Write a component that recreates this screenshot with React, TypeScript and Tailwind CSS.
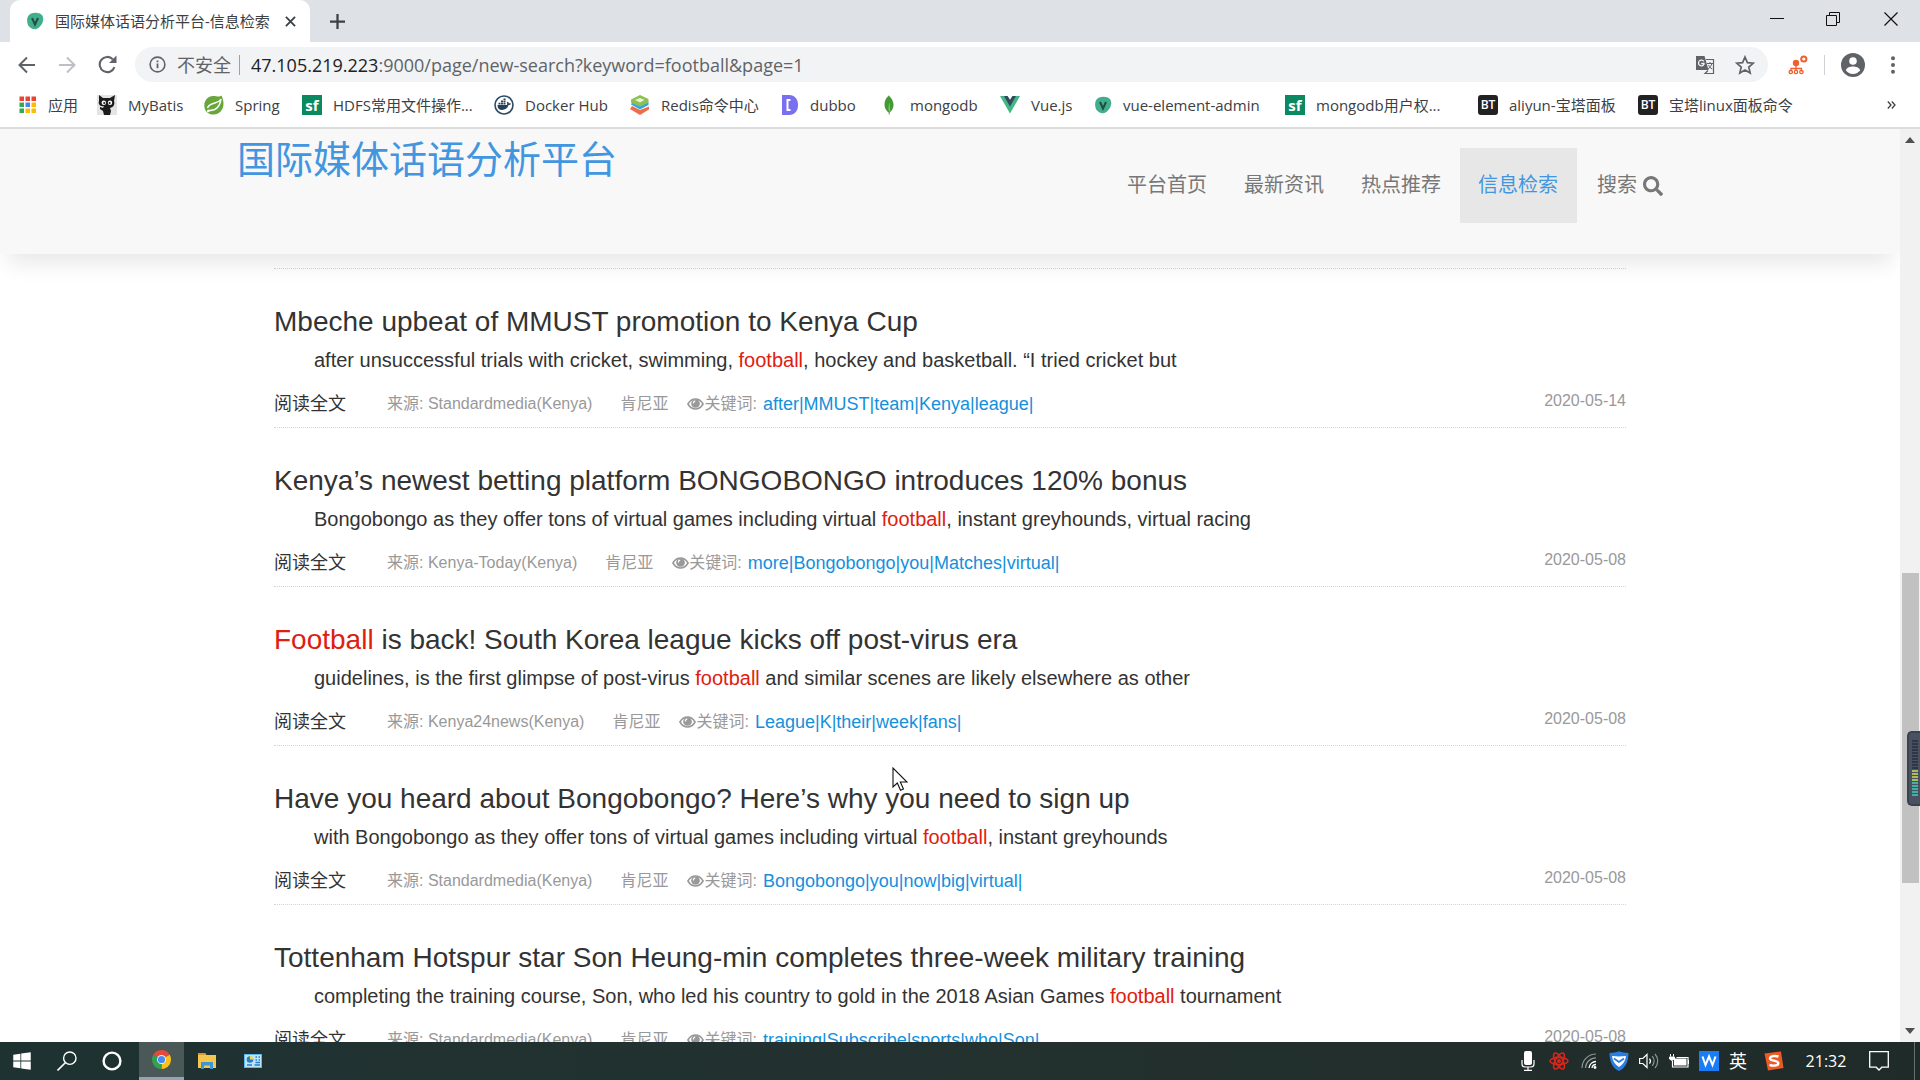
import React from "react";
import { FaSearch, FaWindows } from "react-icons/fa";
import { SiMongodb } from "react-icons/si";

/* ---------- browser icons ---------- */

function LeafIcon({ className }: { className: string }) {
  return (
    <svg viewBox="0 0 18 18" className={className} aria-hidden="true">
      <path d="M4.500 1.800C8 .3 13 .2 16 3c2.500 4 1 8.500-3 12.500C9.500 18.500 5 17.500 2.200 13.500.2 9.500.8 3.800 4.500 1.800z" fill="#41b08a" />
      <path d="M6 6l3 6.500L12 6" fill="none" stroke="#234b4c" strokeWidth="2" />
    </svg>
  );
}

function AppsIcon() {
  const colors = ["#ea4335", "#ea4335", "#ea4335", "#34a853", "#4285f4", "#fbbc05", "#34a853", "#fbbc05", "#fbbc05"];
  return (
    <svg viewBox="0 0 18 18" className="size-[18px]" aria-hidden="true">
      {colors.map((c, i) => (
        <rect key={i} x={(i % 3) * 6 + 0.5} y={Math.floor(i / 3) * 6 + 0.5} width="4.500" height="4.500" fill={c} />
      ))}
    </svg>
  );
}

function CatIcon() {
  return (
    <svg viewBox="0 0 20 20" className="size-5" aria-hidden="true">
      <rect width="20" height="20" fill="#e4e4e4" />
      <path d="M2 0l4 3h7l5-3-1 6c1 3 0 6-4 7l1 3-1 4H7l-1-4-3-2v-2l3 1 1-2C3 12 1 9 2 6z" fill="#1c1c1c" />
      <circle cx="6.800" cy="7.800" r="2.200" fill="#fff" />
      <circle cx="13" cy="7.800" r="2.200" fill="#fff" />
      <circle cx="7.200" cy="8" r="1" fill="#1c1c1c" />
      <circle cx="12.600" cy="8" r="1" fill="#1c1c1c" />
    </svg>
  );
}

function SpringIcon() {
  return (
    <svg viewBox="0 0 20 20" className="size-5" aria-hidden="true">
      <path d="M17.500 .5C19.500 5 20.500 10 18 14.500c-2 4-6 5.500-10 5C3.500 19 .3 15.500.3 10.500.3 5 4 1.200 9 1c3.500 0 6.500 1.500 8.500-.5z" fill="#68a53b" />
      <path d="M3.500 15.500c7 .8 12-1.500 13.500-11.500-3 5.500-12 3-13.500 9" fill="none" stroke="#fff" strokeWidth="1.500" />
      <circle cx="4" cy="16.300" r="1.100" fill="#fff" />
    </svg>
  );
}

function SfIcon() {
  return (
    <span aria-hidden="true" className="flex size-5 items-center justify-center bg-[#0b8a61] font-['Open_Sans',sans-serif] text-[15px] leading-5 font-bold text-white">
      sf
    </span>
  );
}

function BtIcon() {
  return (
    <span aria-hidden="true" className="flex size-5 items-center justify-center rounded-[3px] bg-[#222] font-['Open_Sans',sans-serif] text-[12px] leading-5 font-semibold text-white">
      BT
    </span>
  );
}

function DockerIcon() {
  return (
    <svg viewBox="0 0 20 20" className="size-5" aria-hidden="true">
      <circle cx="10" cy="10" r="9" fill="#fff" stroke="#2b4a63" strokeWidth="1.600" />
      <path d="M3.500 10h9.200c.8-.5.600-1.800.1-2.500l.9-.8c.9.500 1.100 1.200 1.200 1.700.8-.1 1.500 0 2 .4-.4 1-1.300 1.300-2.300 1.300C13.500 13.500 11 15 8 15c-3 0-4.600-1.800-4.500-5z" fill="#24415a" />
      <path d="M4.500 7.700h2v1.800h-2zM7 7.700h2v1.800H7zM9.500 7.700h2v1.800h-2zM7 5.500h2v1.800H7zM9.500 5.500h2v1.800h-2zM9.500 3.500h2v1.400h-2z" fill="#24415a" />
    </svg>
  );
}

function StackIcon() {
  return (
    <svg viewBox="0 0 20 20" className="size-5" aria-hidden="true">
      <path d="M0 14l10 6 9-5.500v-3L10 15 2 11z" fill="#ef6c4a" />
      <path d="M1 9.500l9 5 8.500-4.500V7L10 11 2 7.500z" fill="#3aa5dc" />
      <path d="M1 4.500L10 0l8.500 4v3.200L10 11.500 1 7.500z" fill="#8cc152" />
      <path d="M5 5l5-2 4.500 2L10 7.500z" fill="#e9f5d6" />
    </svg>
  );
}

function DubboIcon() {
  return (
    <svg viewBox="0 0 18 20" className="h-5 w-[18px]" aria-hidden="true">
      <path d="M1 0h7c6 0 9 4.500 9 10s-3 10-9 10H1z" fill="#7a6ff0" />
      <path d="M9.500 5H6.500v10h3" fill="none" stroke="#fff" strokeWidth="2" />
    </svg>
  );
}

function VueIcon() {
  return (
    <svg viewBox="0 0 20 18" className="h-[18px] w-5" aria-hidden="true">
      <path d="M0 0h7.500L10 4l2.500-4H20L10 17.500z" fill="#41b883" />
      <path d="M4 0h3.500L10 4l2.500-4H16l-6 10.500z" fill="#34495e" />
    </svg>
  );
}

type Bookmark = { label: string; icon: React.ReactNode; slot: string };

const bookmarks: Bookmark[] = [
  { label: "应用", icon: <AppsIcon />, slot: "w-[78px]" },
  { label: "MyBatis", icon: <CatIcon />, slot: "w-[107px]" },
  { label: "Spring", icon: <SpringIcon />, slot: "w-[98px]" },
  { label: "HDFS常用文件操作...", icon: <SfIcon />, slot: "w-[192px]" },
  { label: "Docker Hub", icon: <DockerIcon />, slot: "w-[136px]" },
  { label: "Redis命令中心", icon: <StackIcon />, slot: "w-[151px]" },
  { label: "dubbo", icon: <DubboIcon />, slot: "w-[98px]" },
  { label: "mongodb", icon: <SiMongodb className="size-5 text-[#439934]" />, slot: "w-[121px]" },
  { label: "Vue.js", icon: <VueIcon />, slot: "w-[94px]" },
  { label: "vue-element-admin", icon: <LeafIcon className="size-[18px]" />, slot: "w-[191px]" },
  { label: "mongodb用户权...", icon: <SfIcon />, slot: "w-[193px]" },
  { label: "aliyun-宝塔面板", icon: <BtIcon />, slot: "w-[160px]" },
  { label: "宝塔linux面板命令", icon: <BtIcon />, slot: "w-[160px]" },
];

const uiFont = "font-['Open_Sans','Noto_Sans_CJK_SC',sans-serif]";

function TabStrip() {
  return (
    <div className="flex h-[42px] items-stretch bg-[#dee1e6] pl-[10px]">
      <div className="flex w-[300px] items-center rounded-t-[10px] bg-white pl-4">
        <LeafIcon className="size-[18px] shrink-0" />
        <span className="ml-[11px] flex-1 text-[15px] whitespace-nowrap text-[#3c4043]">国际媒体话语分析平台-信息检索</span>
        <button aria-label="关闭标签页" className="mr-3 flex size-4 items-center justify-center">
          <svg viewBox="0 0 12 12" className="size-[11px]" aria-hidden="true">
            <path d="M1 1l10 10M11 1L1 11" stroke="#3c4043" strokeWidth="2" />
          </svg>
        </button>
      </div>
      <button aria-label="新标签页" className="ml-[17px] flex w-5 items-center justify-center">
        <svg viewBox="0 0 16 16" className="size-[15px]" aria-hidden="true">
          <path d="M8 0v16M0 8h16" stroke="#3c4043" strokeWidth="2.400" />
        </svg>
      </button>
      <div className="ml-auto flex h-[37px] items-center">
        <button aria-label="最小化" className="flex w-14 justify-center">
          <svg viewBox="0 0 14 14" className="size-[14px]" aria-hidden="true"><path d="M0 6.500h14" stroke="#111" /></svg>
        </button>
        <button aria-label="还原" className="flex w-14 justify-center">
          <svg viewBox="0 0 14 14" className="size-[14px]" aria-hidden="true">
            <path d="M.5 3.500h10v10H.5zM3.500 3V.5h10v10H11" fill="none" stroke="#111" />
          </svg>
        </button>
        <button aria-label="关闭" className="flex w-[59px] justify-center">
          <svg viewBox="0 0 14 14" className="size-[14px]" aria-hidden="true"><path d="M.5.5l13 13M13.500.5l-13 13" stroke="#111" strokeWidth="1.200" /></svg>
        </button>
      </div>
    </div>
  );
}

function Toolbar() {
  return (
    <div className="flex h-[45px] items-center bg-white pr-[25px] pl-[18px]">
      <button aria-label="后退" className="w-10">
        <svg viewBox="0 0 18 18" className="size-[18px]" aria-hidden="true"><path d="M17 9H2M9 1.500L1.500 9 9 16.500" fill="none" stroke="#5f6368" strokeWidth="2" /></svg>
      </button>
      <button aria-label="前进" className="w-10">
        <svg viewBox="0 0 18 18" className="size-[18px]" aria-hidden="true"><path d="M1 9h15M9 1.500L16.500 9 9 16.500" fill="none" stroke="#bdc1c6" strokeWidth="2" /></svg>
      </button>
      <button aria-label="重新加载" className="w-[37px]">
        <svg viewBox="0 0 18 18" className="size-[19px]" aria-hidden="true">
          <path d="M15.600 11.500A7.200 7.200 0 1 1 14 4" fill="none" stroke="#5f6368" strokeWidth="2" />
          <path d="M17.500.5v7h-7z" fill="#5f6368" />
        </svg>
      </button>
      <div className="flex h-[35px] flex-1 items-center rounded-full bg-[#f1f3f4] pr-[13px] pl-[14px] text-[#5f6368]">
        <svg viewBox="0 0 18 18" className="size-[17px] shrink-0" aria-hidden="true">
          <circle cx="9" cy="9" r="7.800" fill="none" stroke="#5f6368" strokeWidth="1.700" />
          <path d="M9 8v5M9 4.800v1.900" stroke="#5f6368" strokeWidth="1.900" />
        </svg>
        <span className="ml-[11px] text-[18px] leading-6 whitespace-nowrap">不安全</span>
        <span className="mr-[11px] ml-2 h-5 w-px bg-[#9aa0a6]" />
        <span className="flex-1 text-[18px] leading-6 whitespace-nowrap">
          <span className="text-[#202124]">47.105.219.223</span>:9000/page/new-search?keyword=football&amp;page=1
        </span>
        <button aria-label="翻译此页" className="mr-5">
          <svg viewBox="0 0 20 20" className="size-5" aria-hidden="true">
            <path d="M1 1h8.500l4 14H1z" fill="#5f6368" />
            <path d="M11 4.500h7.500v14H10l3-3" fill="none" stroke="#5f6368" strokeWidth="1.200" />
            <path d="M12 8.500h6M15 7v1.500M16.800 8.500c-.5 2.500-2 4.200-3.800 5.500M13.500 10c.8 1.800 2 3.200 3.800 4" fill="none" stroke="#5f6368" />
            <path d="M8.800 6.300A2.900 2.900 0 1 0 9 9.300V8.500H6.200" fill="none" stroke="#f1f3f4" strokeWidth="1.300" />
          </svg>
        </button>
        <button aria-label="收藏">
          <svg viewBox="0 0 20 20" className="size-5" aria-hidden="true">
            <path d="M10 2l2.400 5.600 6 .5-4.600 4 1.400 5.900L10 14.900 4.800 18l1.400-5.900-4.600-4 6-.5z" fill="none" stroke="#5f6368" strokeWidth="1.700" />
          </svg>
        </button>
      </div>
      <button aria-label="扩展程序" className="ml-5">
        <svg viewBox="0 0 20 20" className="size-5" aria-hidden="true">
          <circle cx="8" cy="8" r="3.200" fill="#f0602f" />
          <path d="M8 10v5M3 16.500V13.500h10.500v3" fill="none" stroke="#f0602f" strokeWidth="1.300" />
          <circle cx="2.800" cy="17" r="1.700" fill="none" stroke="#f0602f" strokeWidth="1.300" />
          <circle cx="8" cy="17" r="1.700" fill="none" stroke="#f0602f" strokeWidth="1.300" />
          <circle cx="13.400" cy="17" r="1.700" fill="none" stroke="#f0602f" strokeWidth="1.300" />
          <circle cx="15.800" cy="4" r="2.600" fill="#fff" stroke="#f0602f" strokeWidth="2" />
        </svg>
      </button>
      <span className="ml-4 h-5 w-px bg-[#cfd2d6]" />
      <button aria-label="用户" className="ml-4">
        <svg viewBox="0 0 24 24" className="size-6" aria-hidden="true">
          <circle cx="12" cy="12" r="12" fill="#5f6368" />
          <circle cx="12" cy="8" r="3.800" fill="#fff" />
          <path d="M4.800 17.300c1-3 4.500-3.900 7.200-3.900s6.200.9 7.200 3.900C17.500 19.700 15 21 12 21s-5.500-1.300-7.200-3.700z" fill="#fff" />
        </svg>
      </button>
      <button aria-label="菜单" className="ml-[26px]">
        <svg viewBox="0 0 4 18" className="h-[18px] w-1" aria-hidden="true">
          <circle cx="2" cy="2.200" r="2" fill="#5f6368" /><circle cx="2" cy="9" r="2" fill="#5f6368" /><circle cx="2" cy="15.800" r="2" fill="#5f6368" />
        </svg>
      </button>
    </div>
  );
}

function BookmarksBar() {
  return (
    <div className="flex h-[42px] items-center border-b-2 border-[#dcdcdc] bg-white pb-1 pl-[19px]">
      {bookmarks.map((b, i) => (
        <a key={i} href="#" className={`flex shrink-0 items-center text-[15px] whitespace-nowrap text-[#3c4043] ${b.slot}`}>
          <span className="mr-[11px] flex min-w-[18px] shrink-0 justify-center">{b.icon}</span>
          {b.label}
        </a>
      ))}
      <button aria-label="更多书签" className="mr-6 ml-auto">
        <svg viewBox="0 0 9 8" className="h-2 w-[9px]" aria-hidden="true"><path d="M.8.5L4 4 .8 7.500M4.800.5L8 4 4.800 7.500" fill="none" stroke="#3c4043" strokeWidth="1.300" /></svg>
      </button>
    </div>
  );
}

/* ---------- page ---------- */

const navItems = ["平台首页", "最新资讯", "热点推荐", "信息检索"];

function SiteHeader() {
  return (
    <header className="relative z-10 h-[125px] shrink-0 bg-[#f8f8f8] shadow-[0_18px_20px_-8px_rgba(0,0,0,0.09)]">
      <div className="mx-auto flex max-w-[1462px] items-start justify-between px-[18px]">
        <a href="#" className="mt-[6px] text-[38px] leading-[50px] whitespace-nowrap text-[#4296e0]">国际媒体话语分析平台</a>
        <nav className="mt-[19px] flex text-[20px] leading-[75px] text-[#777]">
          {navItems.map((n, i) => (
            <a
              key={n}
              href="#"
              className={i === 3 ? "bg-[#e7e7e7] pr-[19px] pl-[18px] text-[#4296e0]" : "pr-[19px] pl-[18px]"}
            >
              {n}
            </a>
          ))}
          <a href="#" className="flex items-center gap-[6px] pl-5">
            搜索 <FaSearch className="size-5" />
          </a>
        </nav>
      </div>
    </header>
  );
}

type Result = { title: string; text: string; source: string; keywords: string; date: string };

const results: Result[] = [
  {
    title: "Mbeche upbeat of MMUST promotion to Kenya Cup",
    text: "after unsuccessful trials with cricket, swimming, football, hockey and basketball. “I tried cricket but",
    source: "Standardmedia(Kenya)",
    keywords: "after|MMUST|team|Kenya|league|",
    date: "2020-05-14",
  },
  {
    title: "Kenya’s newest betting platform BONGOBONGO introduces 120% bonus",
    text: "Bongobongo as they offer tons of virtual games including virtual football, instant greyhounds, virtual racing",
    source: "Kenya-Today(Kenya)",
    keywords: "more|Bongobongo|you|Matches|virtual|",
    date: "2020-05-08",
  },
  {
    title: "Football is back! South Korea league kicks off post-virus era",
    text: "guidelines, is the first glimpse of post-virus football and similar scenes are likely elsewhere as other",
    source: "Kenya24news(Kenya)",
    keywords: "League|K|their|week|fans|",
    date: "2020-05-08",
  },
  {
    title: "Have you heard about Bongobongo? Here’s why you need to sign up",
    text: "with Bongobongo as they offer tons of virtual games including virtual football, instant greyhounds",
    source: "Standardmedia(Kenya)",
    keywords: "Bongobongo|you|now|big|virtual|",
    date: "2020-05-08",
  },
  {
    title: "Tottenham Hotspur star Son Heung-min completes three-week military training",
    text: "completing the training course, Son, who led his country to gold in the 2018 Asian Games football tournament",
    source: "Standardmedia(Kenya)",
    keywords: "training|Subscribe|sports|who|Son|",
    date: "2020-05-08",
  },
];

function Highlight({ children }: { children: string }) {
  return (
    <>
      {children.split(/(football)/i).map((part, i) =>
        /^football$/i.test(part) ? <em key={i} className="text-[#e0200f] not-italic">{part}</em> : part
      )}
    </>
  );
}

function EyeIcon() {
  return (
    <svg viewBox="0 0 18 14" className="h-[14px] w-[17px]" aria-hidden="true">
      <path d="M1 7c2-3.500 5-5.300 8-5.300S15 3.500 17 7c-2 3.500-5 5.300-8 5.300S3 10.500 1 7z" fill="none" stroke="#999" strokeWidth="1.700" />
      <circle cx="9" cy="6.500" r="4.600" fill="#999" />
      <path d="M6.800 6.500a2.300 2.300 0 0 1 1.900-2.500" fill="none" stroke="#fff" strokeWidth="1.200" />
    </svg>
  );
}

function ResultItem({ r }: { r: Result }) {
  return (
    <article className="border-b border-dotted border-[#d4d4d4] pt-[37px] pb-[11px]">
      <h3 className="text-[28px] leading-8 whitespace-nowrap text-[#333]">
        <a href="#"><Highlight>{r.title}</Highlight></a>
      </h3>
      <p className="mt-2 pl-10 text-[20px] leading-7 whitespace-nowrap text-[#333]">
        <Highlight>{r.text}</Highlight>
      </p>
      <div className="mt-[18px] flex items-start text-[16px] leading-6 whitespace-nowrap text-[#999]">
        <a href="#" className="mr-[41px] text-[18px] text-[#333]">阅读全文</a>
        <span className="mr-7">来源: {r.source}</span>
        <span className="mr-[19px]">肯尼亚</span>
        <span className="flex h-6 items-center"><EyeIcon />关键词:</span>
        <a href="#" className="ml-[6px] text-[18px] text-[#1490dc]">{r.keywords}</a>
        <time className="ml-auto leading-[18px]">{r.date}</time>
      </div>
    </article>
  );
}

function ScrollBar() {
  return (
    <div className="flex w-5 shrink-0 flex-col items-center bg-[#f1f1f1] py-2" aria-hidden="true">
      <svg viewBox="0 0 10 6" className="h-[6px] w-[10px]"><path d="M0 6l5-6 5 6z" fill="#505050" /></svg>
      <div className="grow-[430]" />
      <div className="w-[17px] grow-[310] bg-[#c1c1c1]" />
      <div className="grow-[145]" />
      <svg viewBox="0 0 10 6" className="h-[6px] w-[10px]"><path d="M0 0l5 6 5-6z" fill="#505050" /></svg>
    </div>
  );
}

/* ---------- desktop overlays ---------- */

function LevelMeter() {
  return (
    <div className="absolute top-[731px] right-0 flex h-[75px] w-[13px] flex-col gap-px rounded-l-[5px] border-y-2 border-l-2 border-[#3a4150] bg-[#4a5262] py-[7px] pl-[3px]" aria-hidden="true">
      {Array.from({ length: 19 }, (_, i) => (
        <span key={i} className={i < 10 ? "h-[2px] w-[6px] bg-[#2f3747]" : i < 14 ? "h-[2px] w-[6px] bg-[#a9bd5a]" : "h-[2px] w-[6px] bg-[#43b0a8]"} />
      ))}
    </div>
  );
}

function Pointer() {
  return (
    <svg viewBox="0 0 16 25" className="absolute top-[767px] left-[892px] h-[25px] w-4" aria-hidden="true">
      <path d="M1 1v19l4.300-4 3.200 7.300 3-1.300-3.200-7H15z" fill="#fff" stroke="#111" strokeWidth="1.100" />
    </svg>
  );
}

/* ---------- taskbar ---------- */

function ChromeIcon() {
  return (
    <svg viewBox="0 0 20 20" className="size-[19px]" aria-hidden="true">
      <path d="M10 10L1.340 5A10 10 0 0 1 18.660 5z" fill="#e5493a" />
      <path d="M10 10L18.660 5A10 10 0 0 1 10 20z" fill="#fbc116" />
      <path d="M10 10v10A10 10 0 0 1 1.340 5z" fill="#31a350" />
      <circle cx="10" cy="10" r="4.700" fill="#f4f4f4" />
      <circle cx="10" cy="10" r="3.800" fill="#4a8af4" />
    </svg>
  );
}

function Taskbar() {
  return (
    <footer className="flex h-[38px] shrink-0 items-center bg-linear-to-r from-[#1e3232] via-[#23312f] to-[#1f2b28] text-white">
      <button aria-label="开始" className="flex w-11 justify-center"><FaWindows className="size-5" /></button>
      <button aria-label="搜索" className="flex w-[46px] justify-center">
        <svg viewBox="0 0 20 20" className="size-5" aria-hidden="true"><circle cx="12.800" cy="7.200" r="6.200" fill="none" stroke="#fff" strokeWidth="1.400" /><path d="M8.300 11.700L.5 19.500" stroke="#fff" strokeWidth="1.600" /></svg>
      </button>
      <button aria-label="Cortana" className="mr-[5px] flex w-11 justify-center">
        <svg viewBox="0 0 20 20" className="size-5" aria-hidden="true"><circle cx="10" cy="10" r="8.400" fill="none" stroke="#fff" strokeWidth="2.400" /></svg>
      </button>
      <button aria-label="Chrome" className="flex h-full w-[45px] items-center justify-center border-b-[3px] border-[#93a4b5] bg-[#4a5857]"><ChromeIcon /></button>
      <button aria-label="文件资源管理器" className="flex w-[46px] justify-center">
        <svg viewBox="0 0 18 16" className="h-4 w-[18px]" aria-hidden="true">
          <path d="M0 0h7l1.500 2H18v13H0z" fill="#f5c64c" /><path d="M0 0h7l1 2H0z" fill="#d99a2b" />
          <path d="M3 16V9h12v7h-3v-3.500H6V16z" fill="#3f95d4" />
        </svg>
      </button>
      <button aria-label="控制面板" className="flex w-[46px] justify-center">
        <svg viewBox="0 0 18 14" className="h-[14px] w-[18px]" aria-hidden="true">
          <rect width="18" height="14" fill="#5cb8ee" /><rect x="1" y="1" width="16" height="12" fill="#bfe4fa" />
          <circle cx="6" cy="5.500" r="3.300" fill="#2580c3" /><path d="M6 5.500V2a3.500 3.500 0 0 1 3.500 3.500z" fill="#f2d75c" />
          <path d="M11.500 3h1.500M14.500 3h1.500M11.500 6h1.500M14.500 6h1.500M11.500 8.500h4.500M3 11h5M10.500 11h5.500" stroke="#2580c3" strokeWidth="1.500" />
        </svg>
      </button>
      <div className="ml-auto flex items-center">
        <span className="flex w-[31px] justify-center">
          <svg viewBox="0 0 14 20" className="h-5 w-[14px]" aria-hidden="true">
            <rect x="3" width="8" height="14" rx="2" fill="#fff" />
            <path d="M1 9v4c0 2 1 3 3 3h6c2 0 3-1 3-3V9M7 16v3M3 19.300h8" fill="none" stroke="#fff" strokeWidth="1.200" />
          </svg>
        </span>
        <span className="flex w-[31px] justify-center">
          <svg viewBox="0 0 20 20" className="size-5" aria-hidden="true">
            <g fill="none" stroke="#d8261c" strokeWidth="1.600">
              <ellipse cx="10" cy="10" rx="9" ry="3.600" /><ellipse cx="10" cy="10" rx="9" ry="3.600" transform="rotate(60 10 10)" /><ellipse cx="10" cy="10" rx="9" ry="3.600" transform="rotate(120 10 10)" />
            </g>
            <circle cx="10" cy="10" r="2" fill="#d8261c" />
          </svg>
        </span>
        <span className="flex w-[30px] justify-center">
          <svg viewBox="0 0 16 16" className="size-4" aria-hidden="true">
            <path d="M1 15A14 14 0 0 1 15 1M4.500 15A10.500 10.500 0 0 1 15 4.800" fill="none" stroke="#8d9795" strokeWidth="1.200" />
            <path d="M8 15a7 7 0 0 1 7-6.500M11 15a4 4 0 0 1 4-3.500" fill="none" stroke="#fff" strokeWidth="1.300" /><circle cx="14" cy="14.500" r="1.400" fill="#fff" />
          </svg>
        </span>
        <span className="flex w-[30px] justify-center">
          <svg viewBox="0 0 20 20" className="size-5" aria-hidden="true">
            <path d="M.5 2C4 2 7 1.500 10 .3 13 1.500 16 2 19.500 2c0 9-3 15-9.500 18C3.500 17 .5 11 .5 2z" fill="#2a7de1" />
            <path d="M3 5c5 .5 9 .5 14 0-.5 5-3 8.500-7 11C6 13.500 3.500 10 3 5z" fill="#fff" /><path d="M5 7.500l5 3.500 5-3.500" fill="none" stroke="#2a7de1" strokeWidth="1.800" />
          </svg>
        </span>
        <span className="flex w-[30px] justify-center">
          <svg viewBox="0 0 20 16" className="h-4 w-5" aria-hidden="true">
            <path d="M.6 5.500h3.200L8 1.500v13l-4.200-4H.6z" fill="none" stroke="#fff" strokeWidth="1.200" />
            <path d="M10.500 5.500a4 4 0 0 1 0 5" fill="none" stroke="#fff" strokeWidth="1.200" /><path d="M13.200 3.200a7 7 0 0 1 0 9.600M16 1a10.500 10.500 0 0 1 0 14" fill="none" stroke="#8d9795" strokeWidth="1.200" />
          </svg>
        </span>
        <span className="flex w-[30px] justify-center">
          <svg viewBox="0 0 20 14" className="h-[14px] w-5" aria-hidden="true">
            <rect x="5" y="4.500" width="12.500" height="7" fill="#fff" /><path d="M3.500 7v6h15.500V3.500H7.500M19 6.500h1v3h-1" fill="none" stroke="#fff" strokeWidth="1.200" />
            <path d="M1.500 0v2.500M4.500 0v2.500M.5 3h5v2L3 6.500.5 5z" fill="#fff" stroke="#fff" />
          </svg>
        </span>
        <span className="flex w-[30px] justify-center">
          <svg viewBox="0 0 20 20" className="size-5" aria-hidden="true">
            <rect width="20" height="20" fill="#1a7df5" /><path d="M3.500 5.500l3 8.500 3.500-8.500 3.500 8.500 3-8.500" fill="none" stroke="#fff" strokeWidth="2" />
          </svg>
        </span>
        <span className="flex w-7 justify-center text-[18px] leading-6">英</span>
        <span className="flex w-[43px] justify-center">
          <svg viewBox="0 0 20 20" className="size-5" aria-hidden="true">
            <path d="M.5 2.500L17 .5l2.500 16.500L4 19.500z" fill="#ed5a24" />
            <path d="M14.500 5.500C11 4.500 6 4.800 6 7.500c0 2.800 8.300 1.500 8.300 4.700 0 2.800-5.500 2.800-8.800 1.600" fill="none" stroke="#fff" strokeWidth="2.400" />
          </svg>
        </span>
        <time className="flex w-[62px] justify-center text-[16px] leading-6">21:32</time>
        <button aria-label="通知" className="mx-3">
          <svg viewBox="0 0 20 20" className="size-5" aria-hidden="true"><path d="M.7.7h18.600v15.500h-6.500L10 19l-2.800-2.800H.7z" fill="none" stroke="#fff" strokeWidth="1.300" /></svg>
        </button>
        <span className="ml-[13px] h-[38px] w-[6px] border-l border-[#66716f]" />
      </div>
    </footer>
  );
}

export default function App() {
  return (
    <div className={`relative flex h-screen flex-col overflow-hidden bg-white ${uiFont}`}>
      <TabStrip />
      <Toolbar />
      <BookmarksBar />
      <div className="flex min-h-0 flex-1 font-['Liberation_Sans','Noto_Sans_CJK_SC',sans-serif]">
        <div className="flex min-w-0 flex-1 flex-col overflow-hidden">
          <SiteHeader />
          <main className="mx-auto w-full max-w-[1352px]">
            <div className="h-[15px] border-b border-dotted border-[#d4d4d4]" />
            {results.map((r) => (
              <ResultItem key={r.title} r={r} />
            ))}
          </main>
        </div>
        <ScrollBar />
      </div>
      <Taskbar />
      <Pointer />
      <LevelMeter />
    </div>
  );
}
